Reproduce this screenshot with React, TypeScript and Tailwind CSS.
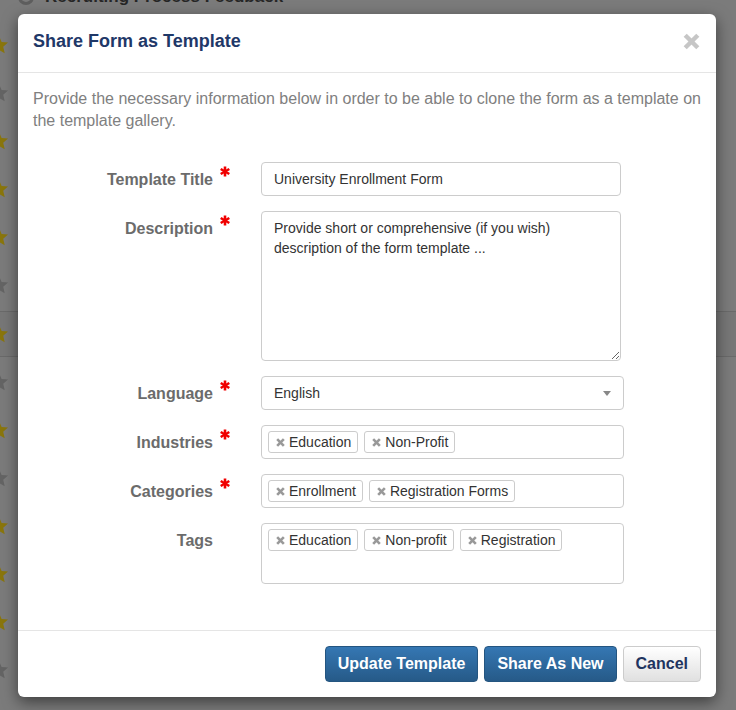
import React from "react";

function Star({ yellow }: { yellow: boolean }) {
  return (
    <svg width="20" height="20" viewBox="0 0 20 20" className="ml-[-11px]">
      <polygon
        points="10,1 12.6,7 19,7.5 14.2,11.8 15.7,18.3 10,14.9 4.3,18.3 5.8,11.8 1,7.5 7.4,7"
        fill={yellow ? "#8a760c" : "#646464"}
      />
    </svg>
  );
}

function StarRow({ yellow }: { yellow: boolean }) {
  return (
    <div className="h-[48px] flex items-center">
      <Star yellow={yellow} />
    </div>
  );
}

function Asterisk() {
  return (
    <svg width="10" height="11" viewBox="0 0 10 11">
      <g stroke="#f00000" strokeWidth="2.6" strokeLinecap="butt">
        <line x1="5" y1="0.5" x2="5" y2="10.5" />
        <line x1="0.7" y1="3" x2="9.3" y2="8" />
        <line x1="0.7" y1="8" x2="9.3" y2="3" />
      </g>
    </svg>
  );
}

function XIcon({ size, color, stroke }: { size: number; color: string; stroke: number }) {
  return (
    <svg width={size} height={size} viewBox="0 0 10 10">
      <g stroke={color} strokeWidth={stroke}>
        <line x1="1.3" y1="1.3" x2="8.7" y2="8.7" />
        <line x1="8.7" y1="1.3" x2="1.3" y2="8.7" />
      </g>
    </svg>
  );
}

function Chip({ label }: { label: string }) {
  return (
    <div className="h-[22px] flex items-center gap-[4px] border border-[#cccccc] rounded-[3px] bg-white pl-[7px] pr-[6px] text-[14px] text-[#333333]">
      <XIcon size={9} color="#999999" stroke={2.9} />
      <span className="leading-[16px]">{label}</span>
    </div>
  );
}

function Label({ text, required }: { text: string; required: boolean }) {
  return (
    <>
      <div className="w-[180px] shrink-0 text-right pt-[9px] leading-[18px] text-[16px] font-bold text-[#6b6b6b]">
        {text}
      </div>
      <div className="w-[48px] shrink-0 pl-[7px] pt-[4px]">{required && <Asterisk />}</div>
    </>
  );
}

function TagBox({ chips, tall }: { chips: string[]; tall?: boolean }) {
  return (
    <div
      className={
        "w-[363px] border border-[#cccccc] rounded-[4px] bg-white flex flex-wrap items-start gap-[6px] px-[6px] pt-[5px] " +
        (tall ? "h-[61px]" : "h-[34px]")
      }
    >
      {chips.map((c) => (
        <Chip key={c} label={c} />
      ))}
    </div>
  );
}

export default function App() {
  return (
    <div className="relative h-[710px] w-[736px] overflow-hidden bg-[#7b7b7b] font-['Liberation_Sans',Arial,sans-serif]">
      {/* dimmed page behind the modal */}
      <div className="absolute inset-0 flex flex-col">
        <div className="h-[311px] flex flex-col">
          <div className="h-[21px] relative">
            <div className="flex items-center gap-[11px] pl-[18px] mt-[-12px]">
              <div className="w-[16px] h-[16px] rounded-full border-[3px] border-[#5e5e5e]" />
              <span className="text-[17px] font-bold text-[#262626] leading-[18px]">
                Recruiting Process Feedback
              </span>
            </div>
          </div>
          <StarRow yellow />
          <StarRow yellow={false} />
          <StarRow yellow />
          <StarRow yellow />
          <StarRow yellow />
          <StarRow yellow={false} />
        </div>
        <div className="h-[46px] border-y border-[#6a6a6a] bg-[#777777] flex items-center">
          <Star yellow />
        </div>
        <div className="flex flex-col pt-[1px]">
          <StarRow yellow={false} />
          <StarRow yellow />
          <StarRow yellow={false} />
          <StarRow yellow />
          <StarRow yellow />
          <StarRow yellow />
          <StarRow yellow={false} />
        </div>
      </div>

      {/* modal */}
      <div className="relative pt-[14px] pl-[18px]">
        <div className="w-[698px] h-[683px] bg-white rounded-[6px] shadow-[0_5px_15px_rgba(0,0,0,0.5)] flex flex-col">
          <div className="h-[59px] shrink-0 border-b border-[#e5e5e5] pl-[15px] pr-[16px] pb-[4px] flex items-center justify-between">
            <h4 className="text-[18px] font-bold text-[#1f3868]">Share Form as Template</h4>
            <XIcon size={17} color="#c6c6c6" stroke={2.6} />
          </div>

          <div className="flex-1 px-[15px] pt-[15px]">
            <p className="text-[16px] leading-[22px] text-[#808080]">
              <span className="whitespace-nowrap">
                Provide the necessary information below in order to be able to clone the form as a template on
              </span>
              <br />
              the template gallery.
            </p>

            <div className="mt-[30px] flex flex-col gap-[15px]">
              <div className="flex items-start">
                <Label text="Template Title" required />
                <div className="w-[360px] h-[34px] border border-[#cccccc] rounded-[4px] px-[12px] flex items-center text-[14px] text-[#333333]">
                  University Enrollment Form
                </div>
              </div>

              <div className="flex items-start">
                <Label text="Description" required />
                <textarea
                  readOnly
                  value={"Provide short or comprehensive (if you wish) description of the form template ..."}
                  className="w-[360px] h-[150px] border border-[#cccccc] rounded-[4px] px-[12px] py-[6px] text-[14px] leading-[20px] text-[#333333] outline-none font-['Liberation_Sans',Arial,sans-serif]"
                />
              </div>

              <div className="flex items-start">
                <Label text="Language" required />
                <div className="w-[363px] h-[34px] border border-[#cccccc] rounded-[4px] pl-[12px] pr-[12px] flex items-center justify-between text-[14px] text-[#333333]">
                  <span>English</span>
                  <div className="w-0 h-0 border-t-[5px] border-t-[#888888] border-x-[4px] border-x-transparent" />
                </div>
              </div>

              <div className="flex items-start">
                <Label text="Industries" required />
                <TagBox chips={["Education", "Non-Profit"]} />
              </div>

              <div className="flex items-start">
                <Label text="Categories" required />
                <TagBox chips={["Enrollment", "Registration Forms"]} />
              </div>

              <div className="flex items-start">
                <Label text="Tags" required={false} />
                <TagBox chips={["Education", "Non-profit", "Registration"]} tall />
              </div>
            </div>
          </div>

          <div className="h-[67px] shrink-0 border-t border-[#e5e5e5] px-[15px] pt-[15px] flex justify-end gap-[6px]">
            <button className="h-[36px] px-[12px] rounded-[4px] border border-[#245580] bg-[linear-gradient(to_bottom,#3577b3,#265a88)] text-white text-[16px] font-bold">
              Update Template
            </button>
            <button className="h-[36px] px-[12px] rounded-[4px] border border-[#245580] bg-[linear-gradient(to_bottom,#3577b3,#265a88)] text-white text-[16px] font-bold">
              Share As New
            </button>
            <button className="h-[36px] px-[12px] rounded-[4px] border border-[#cccccc] bg-[linear-gradient(to_bottom,#ffffff,#e0e0e0)] text-[#1f3460] text-[16px] font-bold">
              Cancel
            </button>
          </div>
        </div>
      </div>
    </div>
  );
}
